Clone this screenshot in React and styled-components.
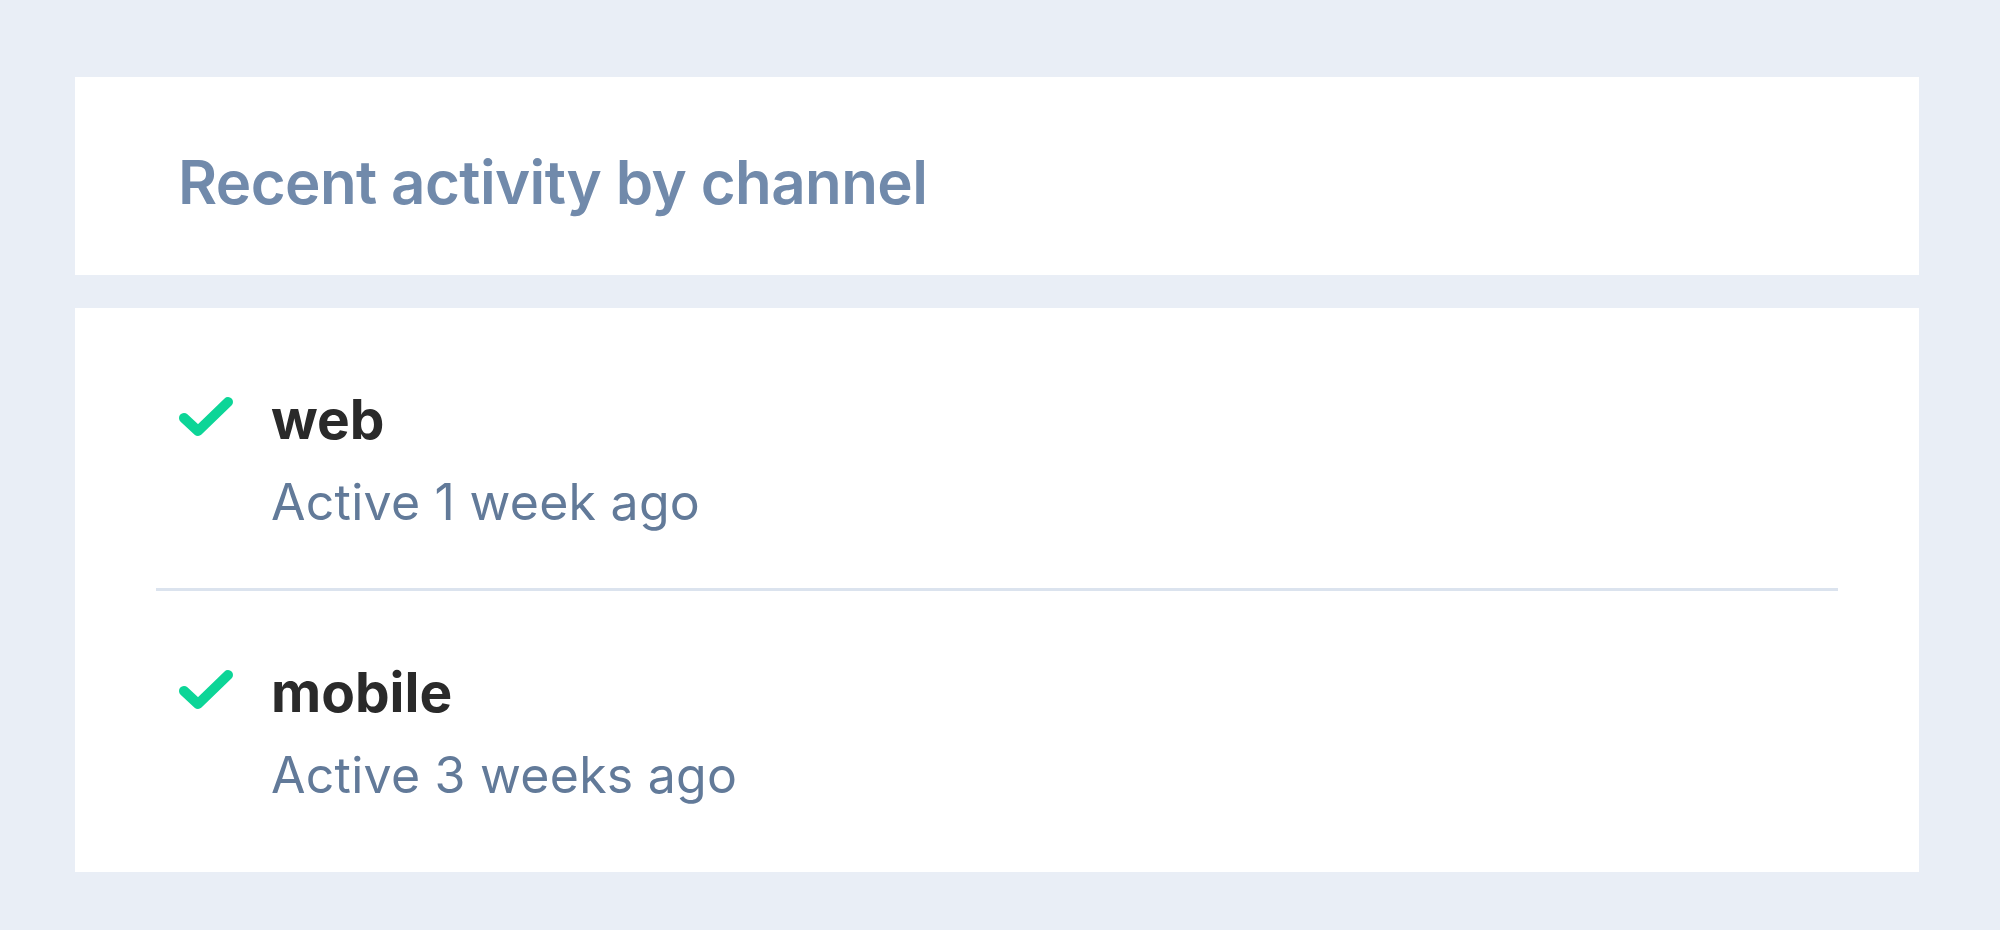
import React from 'react'
import styled, {createGlobalStyle} from "styled-components"

const GlobalStyle = createGlobalStyle`
    html, body {
        margin: 0;
        padding: 0;
        background: #e9eef6;
        font-family: Inter, "Noto Sans", "Liberation Sans", sans-serif;
    }
`

const Page = styled.div`
    min-height: 930px;
    box-sizing: border-box;
    padding: 77px 81px 40px 75px;
    display: flex;
    flex-direction: column;
    gap: 33px;
`

const Card = styled.section`
    background: #ffffff;
    box-sizing: border-box;
`

const HeaderCard = styled(Card)`
    padding: 69px 103px 57px;
`

const Heading = styled.h2`
    margin: 0;
    font-size: 60px;
    line-height: 72px;
    font-weight: 600;
    letter-spacing: -0.6px;
    color: #718aab;
`

const ListCard = styled(Card)`
    padding: 10px 81px 11px;
`

const Row = styled.div`
    display: flex;
    flex-direction: row;
    align-items: flex-start;
    gap: 37px;
    padding: 68px 22px 56px;
    border-top: ${props => props.first ? "none" : "3px solid #dbe3ee"};
`

const CheckIcon = styled.svg`
    flex-shrink: 0;
    width: 56px;
    height: 42px;
    margin-top: 11px;
`

const Texts = styled.div`
    display: flex;
    flex-direction: column;
    gap: 20px;
`

const ChannelName = styled.p`
    margin: 0;
    font-size: 55px;
    line-height: 66px;
    font-weight: 700;
    color: #2a2a2a;
`

const LastActive = styled.p`
    margin: 0;
    font-size: 50px;
    line-height: 60px;
    font-weight: 400;
    letter-spacing: 0.25px;
    color: #627a99;
`

const channels = [
    {name: "web", active: "Active 1 week ago"},
    {name: "mobile", active: "Active 3 weeks ago"},
]

const Check = () => (
    <CheckIcon viewBox="0 0 56 42">
        <polyline
            points="6,21 20,34 50,5"
            fill="none"
            stroke="#0cd597"
            strokeWidth="10"
            strokeLinecap="round"
            strokeLinejoin="round"
        />
    </CheckIcon>
)

const App = () => {
    return (
        <>
            <GlobalStyle />
            <Page>
                <HeaderCard>
                    <Heading>Recent activity by channel</Heading>
                </HeaderCard>
                <ListCard>
                    {channels.map((c, i) => (
                        <Row key={c.name} first={i === 0}>
                            <Check />
                            <Texts>
                                <ChannelName>{c.name}</ChannelName>
                                <LastActive>{c.active}</LastActive>
                            </Texts>
                        </Row>
                    ))}
                </ListCard>
            </Page>
        </>
    )
}

export default App
